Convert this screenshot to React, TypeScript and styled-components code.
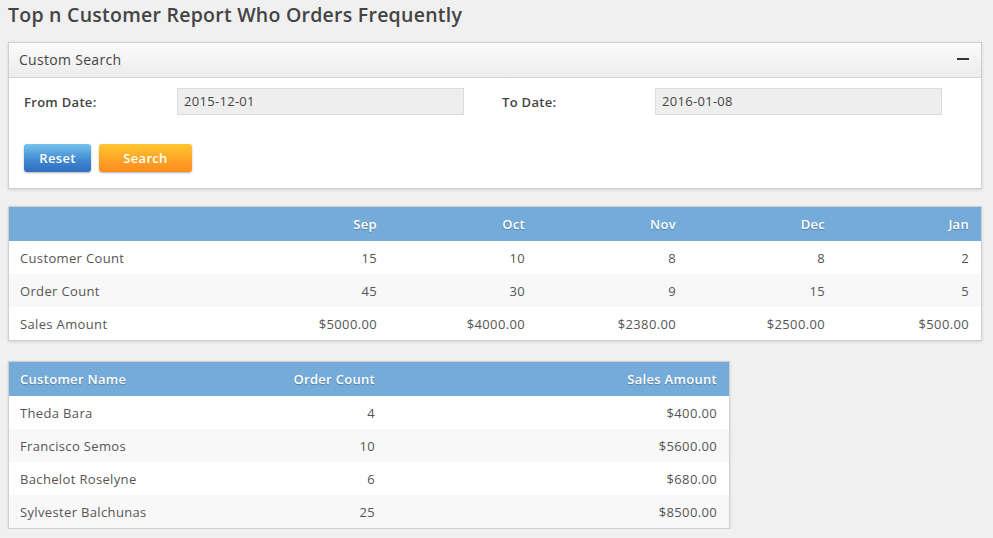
import React from "react";
import styled, { createGlobalStyle } from "styled-components";

const Global = createGlobalStyle`
  html, body { margin: 0; padding: 0; background: #f0f0f0; }
  body { font-family: "Open Sans", "Liberation Sans", sans-serif; color: #555; }
  * { box-sizing: border-box; }
`;

const Page = styled.div`
  width: 993px;
  padding: 0 11px 0 8px;
`;

const Title = styled.h1`
  margin: 0;
  padding-top: 2px;
  height: 42px;
  font-size: 19.5px;
  line-height: 26px;
  font-weight: 600;
  letter-spacing: 0.25px;
  color: #444;
`;

const Panel = styled.section`
  background: #fff;
  border: 1px solid #cfcfcf;
  box-shadow: 0 1px 3px rgba(0, 0, 0, 0.12);
`;

const PanelHeader = styled.div`
  height: 35px;
  display: flex;
  align-items: center;
  justify-content: space-between;
  padding: 0 12px 2px 10px;
  background: linear-gradient(#fbfbfb, #ececec);
  border-bottom: 1px solid #d4d4d4;
  font-size: 14px;
  letter-spacing: 0.3px;
  color: #444;
`;

const Minus = styled.span`
  display: block;
  width: 12px;
  height: 2px;
  margin-top: -1px;
  background: #333;
`;

const PanelBody = styled.div`
  padding: 10px 15px 16px 15px;
`;

const FormRow = styled.div`
  display: flex;
`;

const Field = styled.div`
  flex: 0 0 478px;
  display: flex;
  align-items: center;
`;

const Label = styled.label`
  width: 153px;
  font-size: 13px;
  font-weight: 600;
  letter-spacing: 0.3px;
  color: #444;
`;

const Input = styled.div`
  width: 287px;
  height: 27px;
  background: #eeeeee;
  border: 1px solid #dcdcdc;
  padding: 0 6px;
  font-size: 13px;
  letter-spacing: 0.3px;
  line-height: 25px;
  color: #444;
`;

const Buttons = styled.div`
  display: flex;
  gap: 8px;
  margin-top: 29px;
`;

const Button = styled.button<{ $tone: "blue" | "orange"; $w: number }>`
  width: ${(p) => p.$w}px;
  height: 28px;
  border: none;
  border-radius: 3px;
  font-family: "Open Sans", "Liberation Sans", sans-serif;
  font-size: 13px;
  font-weight: 600;
  letter-spacing: 0.3px;
  color: #fff;
  box-shadow: 0 1px 2px rgba(0, 0, 0, 0.3);
  background: ${(p) =>
    p.$tone === "blue"
      ? "linear-gradient(#73c3ec, #3f86d0 60%, #2f6ec1)"
      : "linear-gradient(#ffc630, #ffa425 55%, #ff8c1e)"};
`;

const Table = styled.div<{ $cols: string; $width: number; $top: number }>`
  width: ${(p) => p.$width}px;
  margin-top: ${(p) => p.$top}px;
  background: #fff;
  border: 1px solid #cfcfcf;
  box-shadow: 0 1px 3px rgba(0, 0, 0, 0.12);
  display: grid;
  grid-template-columns: ${(p) => p.$cols};
`;

const Row = styled.div`
  display: contents;
`;

const HeadCell = styled.div<{ $right?: boolean }>`
  height: 34px;
  background: #74abd9;
  display: flex;
  align-items: center;
  justify-content: ${(p) => (p.$right ? "flex-end" : "flex-start")};
  padding: 0 12px 0 11px;
  font-size: 13px;
  font-weight: 600;
  letter-spacing: 0.3px;
  color: #fff;
  text-shadow: 0 1px 1px rgba(0, 0, 0, 0.25);
`;

const Cell = styled.div<{ $right?: boolean; $alt?: boolean }>`
  height: 33px;
  background: ${(p) => (p.$alt ? "#f8f8f8" : "#fff")};
  display: flex;
  align-items: center;
  justify-content: ${(p) => (p.$right ? "flex-end" : "flex-start")};
  padding: 0 12px 0 11px;
  font-size: 13px;
  letter-spacing: 0.35px;
  color: #555;
`;

const months = ["Sep", "Oct", "Nov", "Dec", "Jan"];
const summary = [
  { label: "Customer Count", values: ["15", "10", "8", "8", "2"] },
  { label: "Order Count", values: ["45", "30", "9", "15", "5"] },
  {
    label: "Sales Amount",
    values: ["$5000.00", "$4000.00", "$2380.00", "$2500.00", "$500.00"],
  },
];

const customers = [
  ["Theda Bara", "4", "$400.00"],
  ["Francisco Semos", "10", "$5600.00"],
  ["Bachelot Roselyne", "6", "$680.00"],
  ["Sylvester Balchunas", "25", "$8500.00"],
];

export default function App() {
  return (
    <Page>
      <Global />
      <Title>Top n Customer Report Who Orders Frequently</Title>
      <Panel>
        <PanelHeader>
          <span>Custom Search</span>
          <Minus />
        </PanelHeader>
        <PanelBody>
          <FormRow>
            <Field>
              <Label>From Date:</Label>
              <Input>2015-12-01</Input>
            </Field>
            <Field>
              <Label>To Date:</Label>
              <Input>2016-01-08</Input>
            </Field>
          </FormRow>
          <Buttons>
            <Button $tone="blue" $w={67}>Reset</Button>
            <Button $tone="orange" $w={93}>Search</Button>
          </Buttons>
        </PanelBody>
      </Panel>

      <Table $cols="232px 148px 148px 151px 149px 144px" $width={974} $top={17}>
        <Row>
          <HeadCell />
          {months.map((m) => (
            <HeadCell key={m} $right>
              {m}
            </HeadCell>
          ))}
        </Row>
        {summary.map((r, i) => (
          <Row key={r.label}>
            <Cell $alt={i % 2 === 1}>{r.label}</Cell>
            {r.values.map((v, j) => (
              <Cell key={j} $right $alt={i % 2 === 1}>
                {v}
              </Cell>
            ))}
          </Row>
        ))}
      </Table>

      <Table $cols="230px 148px 1fr" $width={722} $top={20}>
        <Row>
          <HeadCell>Customer Name</HeadCell>
          <HeadCell $right>Order Count</HeadCell>
          <HeadCell $right>Sales Amount</HeadCell>
        </Row>
        {customers.map((c, i) => (
          <Row key={c[0]}>
            <Cell $alt={i % 2 === 1}>{c[0]}</Cell>
            <Cell $right $alt={i % 2 === 1}>{c[1]}</Cell>
            <Cell $right $alt={i % 2 === 1}>{c[2]}</Cell>
          </Row>
        ))}
      </Table>
    </Page>
  );
}
